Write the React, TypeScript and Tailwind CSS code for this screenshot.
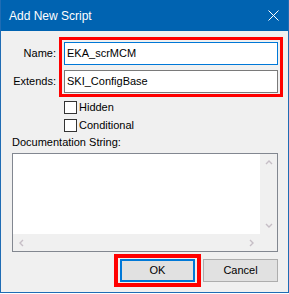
import React from 'react'

const font = "font-['Liberation_Sans','Arial',sans-serif]"

function Chevron({ dir }: { dir: 'up' | 'down' | 'left' | 'right' }) {
  const paths = {
    up: 'M1 5 L4 2 L7 5',
    down: 'M1 2 L4 5 L7 2',
    left: 'M5 1 L2 4 L5 7',
    right: 'M2 1 L5 4 L2 7',
  }
  return (
    <svg width="8" height="8" viewBox="0 0 8 8">
      <path d={paths[dir]} fill="none" stroke="#c6bec6" strokeWidth="1.4" />
    </svg>
  )
}

function Check({ label }: { label: string }) {
  return (
    <div className="flex h-[13px] items-center gap-[2px]">
      <div className="h-[13px] w-[13px] border border-[#333333] bg-white" />
      <span className="text-[11px] leading-none text-black">{label}</span>
    </div>
  )
}

export default function App() {
  return (
    <div className={`h-[294px] w-[289px] bg-white ${font}`}>
      <div className="flex h-[293px] w-[289px] flex-col border-x border-b border-[#1f6cb4] bg-[#f0f0f0]">
        {/* title bar */}
        <div className="flex h-[31px] shrink-0 items-center justify-between bg-[#0063b1] pl-[8px] pr-[9px]">
          <span className="text-[12px] text-white">Add New Script</span>
          <svg width="11" height="11" viewBox="0 0 11 11">
            <path d="M0.5 0.5 L10.5 10.5 M10.5 0.5 L0.5 10.5" stroke="#ffffff" strokeWidth="1" />
          </svg>
        </div>

        <div className="flex flex-col pl-[11px] pr-[10px] pt-[6px] text-[11px] text-black">
          <div className="flex">
            <div className="flex w-[47px] shrink-0 flex-col gap-[5px] pr-[3px] pt-[5px] text-right">
              <div className="h-[23px] leading-[23px]">Name:</div>
              <div className="h-[23px] leading-[23px]">Extends:</div>
            </div>
            <div className="flex w-[224px] shrink-0 flex-col gap-[5px] border-[3px] border-[#ff0000] px-[2px] pb-[1px] pt-[2px]">
              <div className="flex h-[23px] items-center border border-[#0078d7] bg-white pl-[2px]">EKA_scrMCM</div>
              <div className="flex h-[23px] items-center border border-[#7a7a7a] bg-white pl-[2px]">SKI_ConfigBase</div>
            </div>
          </div>

          <div className="mt-[4px] flex flex-col gap-[5px] pl-[52px]">
            <Check label="Hidden" />
            <Check label="Conditional" />
          </div>

          <div className="mt-[2px] h-[16px] leading-[16px]">Documentation String:</div>

          <div className="mt-[3px] flex h-[99px] w-[266px] flex-col border border-[#828790] bg-white">
            <div className="flex flex-1">
              <div className="flex-1" />
              <div className="flex w-[17px] flex-col justify-between bg-[#f0f0f0]">
                <div className="flex h-[17px] items-center justify-center"><Chevron dir="up" /></div>
                <div className="flex h-[17px] items-center justify-center"><Chevron dir="down" /></div>
              </div>
            </div>
            <div className="flex h-[17px] bg-[#f0f0f0]">
              <div className="flex flex-1 items-center justify-between">
                <div className="flex w-[17px] justify-center"><Chevron dir="left" /></div>
                <div className="flex w-[17px] justify-center"><Chevron dir="right" /></div>
              </div>
              <div className="w-[17px]" />
            </div>
          </div>

          <div className="mt-[2px] flex items-center justify-end gap-[2px]">
            <div className="border-4 border-[#ff0000] px-[2px] py-[1px]">
              <div className="flex h-[23px] w-[75px] items-center justify-center border-2 border-[#0078d7] bg-[#e1e1e1]">OK</div>
            </div>
            <div className="flex h-[23px] w-[75px] items-center justify-center border border-[#adadad] bg-[#e1e1e1]">Cancel</div>
          </div>
        </div>
      </div>
    </div>
  )
}
